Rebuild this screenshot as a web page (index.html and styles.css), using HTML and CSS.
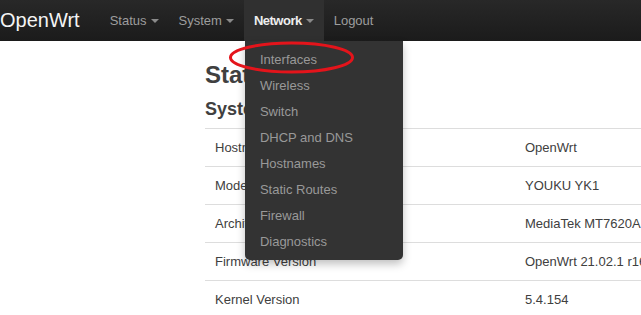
FILE: index.html
```html
<!DOCTYPE html>
<html>
<head>
<meta charset="utf-8">
<title>OpenWrt - Overview</title>
<link rel="stylesheet" href="styles.css">
</head>
<body>
<header class="navbar">
  <a class="brand">OpenWrt</a>
  <ul class="nav">
    <li class="nav-item"><a>Status<span class="caret"></span></a></li>
    <li class="nav-item"><a>System<span class="caret"></span></a></li>
    <li class="nav-item active"><a class="strong">Network<span class="caret"></span></a>
      <ul class="dropdown">
        <li>Interfaces</li>
        <li>Wireless</li>
        <li>Switch</li>
        <li>DHCP and DNS</li>
        <li>Hostnames</li>
        <li>Static Routes</li>
        <li>Firewall</li>
        <li>Diagnostics</li>
      </ul>
    </li>
    <li class="nav-item"><a>Logout</a></li>
  </ul>
  <svg class="mark" width="128" height="34" viewBox="0 0 128 34"><ellipse cx="63.5" cy="16.5" rx="61" ry="14.5" fill="none" stroke="#e4141b" stroke-width="3"/></svg>
</header>
<main class="main">
  <h2 class="title">Status</h2>
  <h3 class="subtitle">System</h3>
  <table class="table">
    <tr><td class="label">Hostname</td><td>OpenWrt</td></tr>
    <tr><td class="label">Model</td><td>YOUKU YK1</td></tr>
    <tr><td class="label">Architecture</td><td>MediaTek MT7620A ver:2 eco:6</td></tr>
    <tr><td class="label">Firmware Version</td><td>OpenWrt 21.02.1 r16325-88151b8303 / LuCI openwrt-21.02 branch</td></tr>
    <tr><td class="label">Kernel Version</td><td>5.4.154</td></tr>
  </table>
</main>
</body>
</html>
```

FILE: styles.css
```css
html { overflow: hidden; }
body {
  margin: 0;
  font-family: "Liberation Sans", Arial, sans-serif;
  font-size: 13px;
  color: #404040;
  background: #fff;
}
.navbar {
  position: relative;
  display: flex;
  align-items: stretch;
  height: 41px;
  background: linear-gradient(to bottom, #282828, #1b1b1b);
  z-index: 10;
}
.brand {
  display: flex;
  align-items: center;
  font-size: 20px;
  color: #f4f4f4;
  padding: 0 20px 0 0;
  margin-top: -1px;
}
.nav {
  display: flex;
  list-style: none;
  margin: 0;
  padding: 0;
}
.nav-item {
  position: relative;
  display: flex;
}
.nav-item > a {
  display: flex;
  align-items: center;
  padding: 0 10px;
  color: #9d9d9d;
  margin-top: -1px;
}
.nav-item > a.strong {
  font-weight: bold;
  color: #eee;
  letter-spacing: -0.5px;
}
.nav-item.active { background: #303030; }
.caret {
  display: inline-block;
  width: 0;
  height: 0;
  margin-left: 4px;
  margin-top: 1px;
  border-top: 4px solid #8a8a8a;
  border-left: 4px solid transparent;
  border-right: 4px solid transparent;
}
.dropdown {
  position: absolute;
  top: 41px;
  left: 1px;
  width: 158px;
  margin: 0;
  padding: 6px 0 5px;
  list-style: none;
  background: #333;
  border-radius: 0 0 5px 5px;
  box-shadow: 0 4px 8px rgba(0,0,0,.25);
}
.dropdown li {
  line-height: 26px;
  padding: 0 15px;
  color: #999;
}
.mark {
  position: absolute;
  left: 228px;
  top: 41px;
  z-index: 20;
}
.main {
  padding-left: 205px;
  width: 900px;
}
.title {
  margin: 19px 0 0;
  font-size: 24px;
  line-height: 30px;
  color: #404040;
}
.subtitle {
  margin: 7px 0 0;
  font-size: 18px;
  line-height: 24px;
  color: #404040;
}
.table {
  margin-top: 7px;
  width: 100%;
  border-collapse: collapse;
}
.table td {
  border-top: 1px solid #ddd;
  height: 37px;
  padding: 0 10px;
  white-space: nowrap;
  vertical-align: middle;
}
.table td.label { width: 290px; }
```
